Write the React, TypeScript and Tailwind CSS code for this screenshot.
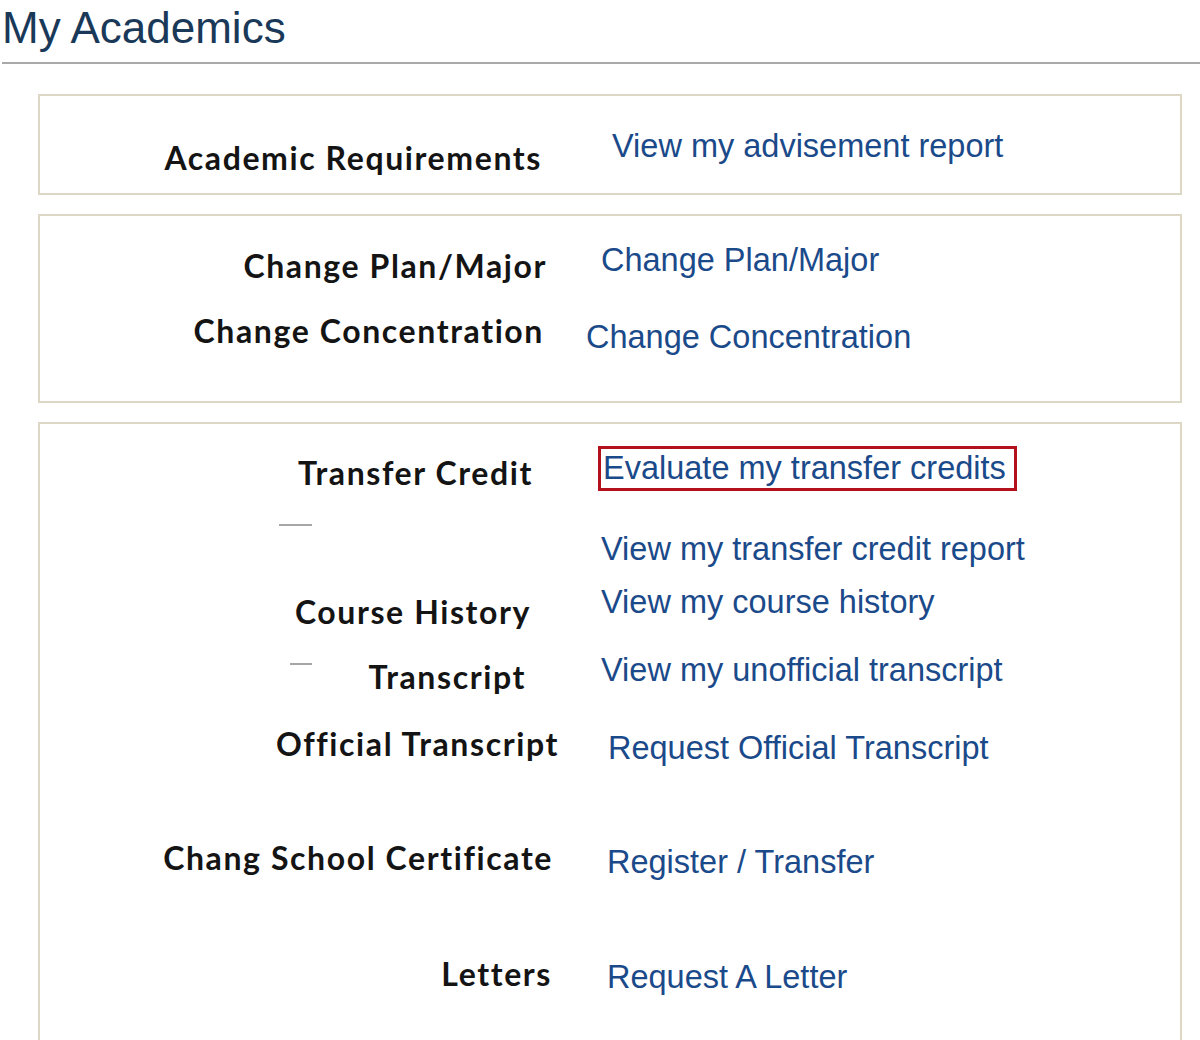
import React from "react";

const labelBase =
  "shrink-0 text-right font-['Lato',sans-serif] font-bold text-[32px] leading-[40px] tracking-[1.6px] text-[#141414]";
const linkBase =
  "shrink-0 font-['Liberation_Sans',Arial,sans-serif] text-[32.5px] leading-[40px] text-[#1b4a8a] whitespace-nowrap";

function Row({
  label,
  link,
  labelCls,
  linkCls,
}: {
  label: string;
  link: string;
  labelCls: string;
  linkCls: string;
}) {
  return (
    <div className="flex items-start">
      <div className={`${labelBase} ${labelCls}`}>{label}</div>
      <a href="#" className={`${linkBase} ${linkCls}`}>
        {link}
      </a>
    </div>
  );
}

export default function App() {
  return (
    <div className="w-[1200px] h-[1040px] overflow-hidden bg-white">
      <div className="h-[62px] pt-[3px] pl-[2px] font-['Liberation_Sans',Arial,sans-serif] text-[44px] leading-[50px] text-[#1a3959]">
        My Academics
      </div>
      <div className="ml-[2px] h-[2px] bg-[#a9a9a9]" />

      {/* Box 1 */}
      <div className="mt-[30px] ml-[38px] w-[1144px] border-2 border-[#ddd8c5] pt-[30px] pb-[15px]">
        <Row
          label="Academic Requirements"
          link="View my advisement report"
          labelCls="w-[502px] mt-[12px]"
          linkCls="ml-[70px] mt-0"
        />
      </div>

      {/* Box 2 */}
      <div className="mt-[19px] ml-[38px] w-[1144px] border-2 border-[#ddd8c5] pt-[24px] pb-[44px]">
        <Row
          label="Change Plan/Major"
          link="Change Plan/Major"
          labelCls="w-[507px] mt-[6px]"
          linkCls="ml-[54px] mt-0"
        />
        <Row
          label="Change Concentration"
          link="Change Concentration"
          labelCls="w-[504px] mt-[25px]"
          linkCls="ml-[42px] mt-[31px]"
        />
      </div>

      {/* Box 3 */}
      <div className="mt-[19px] ml-[38px] w-[1144px] border-2 border-[#ddd8c5] pt-[22px] pb-[60px]">
        <div className="flex items-start">
          <div className={`${labelBase} w-[493px] mt-[7px]`}>Transfer Credit</div>
          <a
            href="#"
            className="ml-[65px] shrink-0 whitespace-nowrap border-[3px] border-[#b3121c] pl-[2px] pr-[8px] font-['Liberation_Sans',Arial,sans-serif] text-[32.5px] leading-[39px] text-[#1b4a8a]"
          >
            Evaluate my transfer credits
          </a>
        </div>

        <div className="flex items-start">
          <div className="w-[491px] shrink-0">
            <div className="ml-[239px] mt-[31px] h-[2px] w-[33px] bg-[#a6a6a6]" />
          </div>
          <a href="#" className={`${linkBase} ml-[70px] mt-[36px]`}>
            View my transfer credit report
          </a>
        </div>

        <Row
          label="Course History"
          link="View my course history"
          labelCls="w-[491px] mt-[23px]"
          linkCls="ml-[70px] mt-[13px]"
        />

        <div className="flex items-start">
          <div className="flex w-[486px] shrink-0 items-start">
            <div className="ml-[250px] mt-[31px] h-[2px] w-[22px] shrink-0 bg-[#a6a6a6]" />
            <div className="flex-1" />
            <div className={`${labelBase} mt-[25px]`}>Transcript</div>
          </div>
          <a href="#" className={`${linkBase} ml-[75px] mt-[18px]`}>
            View my unofficial transcript
          </a>
        </div>

        <Row
          label="Official Transcript"
          link="Request Official Transcript"
          labelCls="w-[519px] mt-[27px]"
          linkCls="ml-[49px] mt-[31px]"
        />
        <Row
          label="Chang School Certificate"
          link="Register / Transfer"
          labelCls="w-[513px] mt-[70px]"
          linkCls="ml-[54px] mt-[74px]"
        />
        <Row
          label="Letters"
          link="Request A Letter"
          labelCls="w-[512px] mt-[72px]"
          linkCls="ml-[55px] mt-[75px]"
        />
      </div>
    </div>
  );
}
